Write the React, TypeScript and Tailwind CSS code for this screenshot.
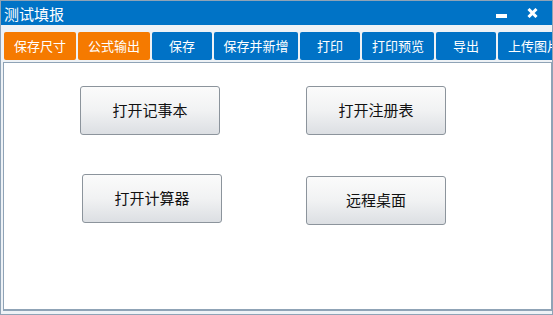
const tools = [
  { label: "保存尺寸", w: "w-[72px]", color: "bg-[#f57a00]" },
  { label: "公式输出", w: "w-[72px]", color: "bg-[#f57a00]" },
  { label: "保存", w: "w-[60px]", color: "bg-[#0072c6]" },
  { label: "保存并新增", w: "w-[84px]", color: "bg-[#0072c6]" },
  { label: "打印", w: "w-[60px]", color: "bg-[#0072c6]" },
  { label: "打印预览", w: "w-[72px]", color: "bg-[#0072c6]" },
  { label: "导出", w: "w-[60px]", color: "bg-[#0072c6]" },
  { label: "上传图片", w: "w-[72px]", color: "bg-[#0072c6]" },
]

function BigButton({ label, className }: { label: string; className?: string }) {
  return (
    <button
      className={
        "w-[140px] h-[49px] rounded-[3px] border border-[#8c949c] bg-gradient-to-b from-[#fbfbfb] via-[#f1f2f3] to-[#dcdfe3] text-[15px] text-[#111] shrink-0 " +
        (className ?? "")
      }
    >
      {label}
    </button>
  )
}

export default function App() {
  return (
    <div
      className="w-[553px] h-[315px] overflow-hidden bg-[#eef2f6] border border-[#8fa3b6] flex flex-col"
      style={{ fontFamily: '"Noto Sans CJK SC", "DejaVu Sans", sans-serif' }}
    >
      <div className="h-[24px] bg-[#0073c6] flex items-center justify-between shrink-0">
        <span className="text-white text-[15px] pl-[3px] leading-none">测试填报</span>
        <div className="flex items-center gap-[20px] pr-[14px]">
          <div className="w-[11px] h-[4px] bg-white mt-[6px]" />
          <svg width="11" height="10" viewBox="0 0 11 10">
            <path d="M1.5 1 L9.5 9 M9.5 1 L1.5 9" stroke="white" strokeWidth="3" />
          </svg>
        </div>
      </div>
      <div className="flex gap-[2px] pl-[3px] pt-[7px] pb-[2px] shrink-0 overflow-hidden">
        {tools.map((t) => (
          <div
            key={t.label}
            className={
              t.w +
              " " +
              t.color +
              " h-[28px] rounded-[2px] shrink-0 flex items-center justify-center text-white text-[13px] whitespace-nowrap overflow-hidden"
            }
          >
            {t.label}
          </div>
        ))}
      </div>
      <div className="flex-1 ml-[2px] mr-[0px] mb-[3px] bg-white border border-[#8fa3b6] border-b-2 pt-[23px]">
        <div className="flex pl-[76px] gap-[86px]">
          <BigButton label="打开记事本" />
          <BigButton label="打开注册表" />
        </div>
        <div className="flex pl-[78px] gap-[84px] mt-[39px]">
          <BigButton label="打开计算器" />
          <BigButton label="远程桌面" className="mt-[2px]" />
        </div>
      </div>
    </div>
  )
}
